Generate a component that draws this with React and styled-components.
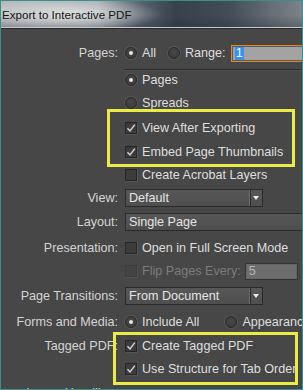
import styled, { createGlobalStyle } from "styled-components";

const Global = createGlobalStyle`
  html, body {
    margin: 0;
    padding: 0;
    background: #474747;
  }
  body {
    font-family: "Liberation Sans", Arial, sans-serif;
    font-size: 12.6px;
  }
`;

const Window = styled.div`
  width: 303px;
  height: 390px;
  box-sizing: border-box;
  border: 1px solid #3f8d89;
  overflow: hidden;
  display: flex;
  flex-direction: column;
  background: #474747;
`;

const TitleBar = styled.div`
  flex: none;
  height: 26px;
  display: flex;
  align-items: center;
  padding-left: 1px;
  border-bottom: 1px solid #c6cace;
  color: #151515;
  font-size: 11.6px;
  background:
    radial-gradient(ellipse 95px 17px at 66px 13px, rgba(226, 226, 226, 0.95), rgba(226, 226, 226, 0) 100%),
    linear-gradient(180deg, rgba(0, 0, 0, 0) 55%, rgba(30, 40, 50, 0.3) 100%),
    linear-gradient(90deg, #b6b9bc 0%, #a4a9ae 32%, #56616b 47%, #37424c 58%, #414c56 75%, #666e76 90%, #7d8389 100%);
`;

const Body = styled.div`
  flex: 1;
  border-top: 1px solid #2a2a2a;
  padding-top: 15px;
  display: flex;
  flex-direction: column;
  color: #dadada;
`;

const Row = styled.div`
  display: flex;
  align-items: flex-start;
  margin-top: ${(p) => p.$mt || 0}px;
`;

const Label = styled.div`
  flex: none;
  width: 117px;
  margin-right: 7px;
  height: 18px;
  line-height: 18px;
  text-align: right;
  white-space: nowrap;
  color: #d4d4d4;
`;

const Controls = styled.div`
  flex: 1;
  min-width: 0;
  display: flex;
  flex-direction: column;
`;

const Highlight = styled(Controls)`
  position: relative;
  gap: ${(p) => p.$gap}px;

  &::after {
    content: "";
    position: absolute;
    top: ${(p) => -p.$t}px;
    bottom: ${(p) => -p.$b}px;
    left: ${(p) => -p.$l}px;
    right: ${(p) => p.$r}px;
    border: 3px solid #ebeb47;
    pointer-events: none;
  }
`;

const Line = styled.div`
  display: flex;
  align-items: center;
  height: 18px;
  white-space: nowrap;
`;

const Separator = styled.div`
  height: 0;
  margin: 7px 0 0 123px;
  border-top: 1px solid #2d2d2d;
  border-bottom: 1px solid #505050;
`;

const Option = styled.div`
  display: flex;
  align-items: center;
  margin-right: ${(p) => p.$gap || 0}px;
  color: ${(p) => (p.$disabled ? "#7c7c7c" : "#dedede")};
`;

const RadioDot = styled.span`
  flex: none;
  box-sizing: border-box;
  width: 12px;
  height: 12px;
  margin-right: 5px;
  border-radius: 50%;
  border: 1px solid #2b2b2b;
  background: radial-gradient(circle at 50% 40%, #484848, #383838);
  box-shadow: 0 0 0 1px rgba(120, 120, 120, 0.35);
  display: flex;
  align-items: center;
  justify-content: center;

  &::after {
    content: "";
    display: ${(p) => (p.$on ? "block" : "none")};
    width: 4px;
    height: 4px;
    border-radius: 50%;
    background: #e6e6e6;
  }
`;

const Box = styled.span`
  flex: none;
  box-sizing: border-box;
  width: 12px;
  height: 12px;
  margin-right: 5px;
  border: 1px solid ${(p) => (p.$disabled ? "#3c3c3c" : "#272727")};
  background: ${(p) => (p.$disabled ? "#444444" : "#3c3c3c")};
  box-shadow: 1px 1px 0 rgba(110, 110, 110, 0.35);
  display: flex;
  align-items: center;
  justify-content: center;
`;

const Field = styled.div`
  flex: none;
  box-sizing: border-box;
  width: ${(p) => p.$w}px;
  height: 17px;
  padding-left: 3px;
  display: flex;
  align-items: center;
  border: 1px solid ${(p) => (p.$focus ? "#df8a24" : "#353535")};
  box-shadow: inset 0 0 0 1px ${(p) => (p.$focus ? "#5c5c5c" : "#666666")};
  background: ${(p) => (p.$focus ? "#a3a3a3" : "#6e6e6e")};
  color: ${(p) => (p.$focus ? "#1a1a1a" : "#b4b4b4")};
`;

const Selected = styled.span`
  background: #3392f5;
  color: #ffffff;
  padding: 0 1px;
  line-height: 13px;
`;

const Select = styled.div`
  flex: none;
  box-sizing: border-box;
  width: ${(p) => p.$w}px;
  height: 18px;
  display: flex;
  align-items: center;
  border: 1px solid #2a2a2a;
  background: linear-gradient(#575757, #4e4e4e);
  color: #e4e4e4;
`;

const SelectText = styled.span`
  flex: 1;
  padding-left: 3px;
  white-space: nowrap;
`;

const SelectArrow = styled.span`
  flex: none;
  width: 13px;
  height: 100%;
  box-sizing: border-box;
  border-left: 1px solid #6a6a6a;
  box-shadow: inset 1px 0 0 #2e2e2e;
  display: flex;
  align-items: center;
  justify-content: center;

  &::before {
    content: "";
    border-left: 3.5px solid transparent;
    border-right: 3.5px solid transparent;
    border-top: 4px solid #ececec;
  }
`;

const Tick = () => (
  <svg width="10" height="10" viewBox="0 0 10 10">
    <path d="M1.5 5.2 L4 8 L8.8 1.6" fill="none" stroke="#d6d6d6" strokeWidth="1.4" />
  </svg>
);

const Radio = ({ on, children, gap }) => (
  <Option $gap={gap}>
    <RadioDot $on={on} />
    {children}
  </Option>
);

const Check = ({ on, disabled, children, gap }) => (
  <Option $gap={gap} $disabled={disabled}>
    <Box $disabled={disabled}>{on && <Tick />}</Box>
    {children}
  </Option>
);

const Dropdown = ({ value, width, arrow = true }) => (
  <Select $w={width}>
    <SelectText>{value}</SelectText>
    {arrow && <SelectArrow />}
  </Select>
);

export default function App() {
  return (
    <>
      <Global />
      <Window>
        <TitleBar>Export to Interactive PDF</TitleBar>
        <Body>
          <Row>
            <Label>Pages:</Label>
            <Controls>
              <Line>
                <Radio on gap={12}>All</Radio>
                <Radio gap={5}>Range:</Radio>
                <Field $w={90} $focus>
                  <Selected>1</Selected>
                </Field>
              </Line>
            </Controls>
          </Row>
          <Separator />
          <Row>
            <Label />
            <Controls>
              <Line>
                <Radio on>Pages</Radio>
              </Line>
            </Controls>
          </Row>
          <Row $mt={5}>
            <Label />
            <Controls>
              <Line>
                <Radio>Spreads</Radio>
              </Line>
            </Controls>
          </Row>
          <Row $mt={7}>
            <Label />
            <Highlight $gap={6} $t={10} $b={6} $l={18} $r={7}>
              <Line>
                <Check on>View After Exporting</Check>
              </Line>
              <Line>
                <Check on>Embed Page Thumbnails</Check>
              </Line>
            </Highlight>
          </Row>
          <Row $mt={5}>
            <Label />
            <Controls>
              <Line>
                <Check>Create Acrobat Layers</Check>
              </Line>
            </Controls>
          </Row>
          <Row $mt={5}>
            <Label>View:</Label>
            <Controls>
              <Line>
                <Dropdown value="Default" width={138} />
              </Line>
            </Controls>
          </Row>
          <Row $mt={6}>
            <Label>Layout:</Label>
            <Controls>
              <Line>
                <Dropdown value="Single Page" width={230} arrow={false} />
              </Line>
            </Controls>
          </Row>
          <Row $mt={8}>
            <Label>Presentation:</Label>
            <Controls>
              <Line>
                <Check>Open in Full Screen Mode</Check>
              </Line>
            </Controls>
          </Row>
          <Row $mt={5}>
            <Label />
            <Controls>
              <Line>
                <Check disabled gap={4}>Flip Pages Every:</Check>
                <Field $w={53}>5</Field>
              </Line>
            </Controls>
          </Row>
          <Row $mt={7}>
            <Label>Page Transitions:</Label>
            <Controls>
              <Line>
                <Dropdown value="From Document" width={138} />
              </Line>
            </Controls>
          </Row>
          <Row $mt={8}>
            <Label>Forms and Media:</Label>
            <Controls>
              <Line>
                <Radio on gap={26}>Include All</Radio>
                <Radio>Appearance Only</Radio>
              </Line>
            </Controls>
          </Row>
          <Row $mt={6}>
            <Label>Tagged PDF:</Label>
            <Highlight $gap={5} $t={5} $b={7} $l={12} $r={4}>
              <Line>
                <Check on>Create Tagged PDF</Check>
              </Line>
              <Line>
                <Check on>Use Structure for Tab Order</Check>
              </Line>
            </Highlight>
          </Row>
          <Row $mt={6}>
            <Label>Image Handling:</Label>
          </Row>
        </Body>
      </Window>
    </>
  );
}
